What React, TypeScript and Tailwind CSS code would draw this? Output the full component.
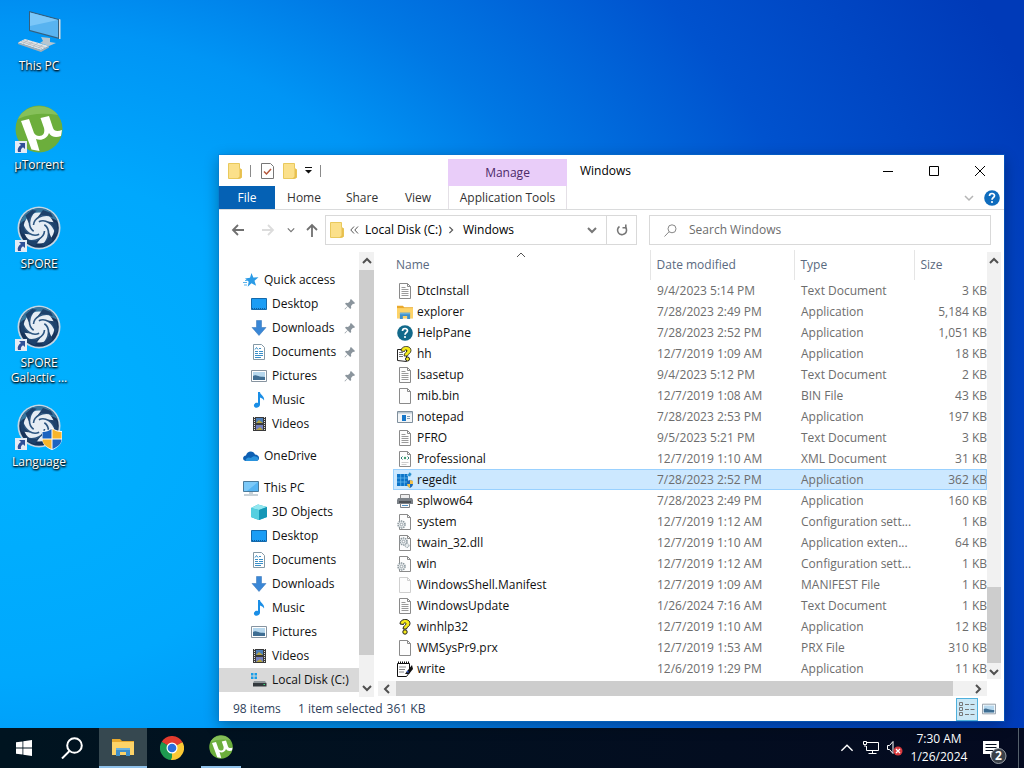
import React from "react";

type IconProps = { className?: string };

/* ---------- desktop icons ---------- */

function ThisPcIcon({ className }: IconProps) {
  return (
    <svg viewBox="0 0 48 48" className={className} aria-hidden="true">
      <path d="M26 31l9 1v4l6 1-7 3-9-3 3-2z" fill="#b6c6d0" />
      <path d="M14 5l30 8v20L14 25z" fill="#34607f" />
      <path d="M15 6.500l28 7.500v17.500L15 24z" fill="#58b3f0" />
      <path d="M15 6.500l28 7.500L15 20z" fill="#7cc7f8" />
      <path d="M44 13l1.500.5V33L44 33z" fill="#d5dde2" />
      <path d="M10 33l24 7-8 4L3 36.500z" fill="#e2e5e7" />
      <path d="M3 36.500L26 44l8-4v1.500l-8 4.500L3 38z" fill="#a5aeb5" />
      <path d="M8 34.500l22 7M6 35.500l21 7M13 34l-5 3.500M18 35.500l-5 3.500M23 37l-5 3.500M28 38.500l-5 3.500" stroke="#b0b8be" strokeWidth="0.800" />
    </svg>
  );
}

function UTorrentIcon({ className }: IconProps) {
  return (
    <svg viewBox="0 0 48 48" className={className} aria-hidden="true">
      <circle cx="24" cy="24" r="23.500" fill="#6cae3c" />
      <path d="M3 14C9 0 32-4 43 10 30 8 16 8 3 14z" fill="#86c05a" />
      <path
        d="M6 16l8-2 5 14c2 4 8 3.500 9.500 1 1-2 1-4 .5-6l-3.500-10 8.500-2 4 12c1 3 4 4 9 2l-1 6c-5 2-10 1-12-3-2 6-8 8-13 6l3.500 12-8-1.500z"
        fill="#fff"
      />
    </svg>
  );
}

function SporeIcon({ className }: IconProps) {
  return (
    <svg viewBox="0 0 48 48" className={className} fill="none" aria-hidden="true">
      <circle cx="24" cy="24" r="21.500" fill="#c3d6e4" />
      <circle cx="24" cy="24" r="19.800" fill="#17335a" />
      <path d="M5 20a19.500 19.500 0 0137.500-3C30 10 16 10 5 20z" fill="#35769f" />
      <circle cx="24" cy="24" r="15.500" fill="#e6edf4" />
      {[0, 60, 120, 180, 240, 300].map((angle) => (
        <g key={angle} transform={`rotate(${angle} 24 24)`}>
          <path d="M18.500 21C19 14 27 9.500 37 12" stroke="#2c5580" strokeWidth="1.600" />
          <path d="M21 15.500C25 10.500 31 9.500 38 13.500L36 9l-8-3z" fill="#1d416b" />
        </g>
      ))}
    </svg>
  );
}

function ShortcutBadge() {
  return (
    <svg viewBox="0 0 12 12" className="absolute bottom-0 left-0 size-3" aria-hidden="true">
      <path d="M0 0h12v12H0z" fill="#e4ebf5" />
      <path d="M4 2h6v6L8 6.200C6 7.500 5.500 9 6 11H3C2 8 3.500 5.500 6 4z" fill="#2f4f98" />
    </svg>
  );
}

function ShieldBadge() {
  return (
    <svg viewBox="0 0 22 22" className="absolute right-0 bottom-0 size-[22px]" aria-hidden="true">
      <path d="M11 0c3 2 6 3 10 3v8c0 5-5 9-10 11C6 20 1 16 1 11V3c4 0 7-1 10-3z" fill="#fff" />
      <path d="M10.500 1C8 3 5 4 1.500 4v6.500h9z" fill="#1c63c0" />
      <path d="M11.500 1C14 3 17 4 20.500 4v6.500h-9z" fill="#f8b52c" />
      <path d="M1.500 11.500h9V21c-5-2-9-5-9-9.500z" fill="#f8b52c" />
      <path d="M20.500 11.500h-9V21c5-2 9-5 9-9.500z" fill="#1c63c0" />
    </svg>
  );
}

/* ---------- small icons ---------- */

function FolderIcon({ className }: IconProps) {
  return (
    <svg viewBox="0 0 14 16" className={className} aria-hidden="true">
      <path d="M.500.500h11v5l2 1v8l-2 1H.500z" fill="#fbe08a" stroke="#e9c95c" />
      <path d="M11.500 5.500v8l-2 2h2.500l1.500-1v-8z" fill="#e8bf4f" />
    </svg>
  );
}

function ExplorerIcon({ className }: IconProps) {
  return (
    <svg viewBox="0 0 22 18" className={className} preserveAspectRatio="none" aria-hidden="true">
      <path d="M0 1h8l2 2h12v14H0z" fill="#e9a92d" />
      <path d="M0 4h22v13H0z" fill="#fdd368" />
      <path d="M4 10h14v8h-4v-4H8v4H4z" fill="#3f8fc9" />
      <path d="M4 10h14v2H4z" fill="#6bb1dd" />
    </svg>
  );
}

function Sheet({ children, faded }: { children?: React.ReactNode; faded?: boolean }) {
  return (
    <svg viewBox="0 0 16 16" className="size-4" fill="none" aria-hidden="true">
      <path d="M2.500.500h8l3 3v12h-11z" fill="#fdfdfd" stroke={faded ? "#cfcfcf" : "#8a8a8a"} />
      <path d="M10.500.500v3h3" stroke={faded ? "#cfcfcf" : "#8a8a8a"} />
      {children}
    </svg>
  );
}

function Gear({ x, y }: { x: number; y: number }) {
  return (
    <g>
      <circle cx={x} cy={y} r="3.500" fill="#e5e9eb" stroke="#8b979d" strokeWidth="1.500" strokeDasharray="1.400 0.800" />
      <circle cx={x} cy={y} r="1.300" fill="#fff" stroke="#8b979d" strokeWidth="0.800" />
    </g>
  );
}

function HelpIcon({ className, fill = "#0f6cbd" }: IconProps & { fill?: string }) {
  return (
    <svg viewBox="0 0 16 16" className={className} fill="none" aria-hidden="true">
      <circle cx="8" cy="8" r="7.800" fill={fill} />
      <path d="M5.500 6c0-3.300 5-3.200 5-.3C10.500 7.500 8 7.500 8 9.700" stroke="#fff" strokeWidth="1.700" />
      <circle cx="8" cy="12" r="1.100" fill="#fff" />
    </svg>
  );
}

const questionMark = "M4 5C4-1 14-1 14 4.500 14 8 10.500 7.500 10.500 10H7c0-3.500 3-3.500 3-5.300C10 3.500 7.500 3.500 7.500 5.500z";

const fileIcons: Record<string, React.ReactNode> = {
  text: (
    <Sheet>
      <path d="M4.500 4.500h4M4.500 6.500h7M4.500 8.500h7M4.500 10.500h7M4.500 12.500h7" stroke="#9a9a9a" />
    </Sheet>
  ),
  blank: <Sheet />,
  manifest: <Sheet faded />,
  explorer: <ExplorerIcon className="h-3.5 w-4" />,
  help: <HelpIcon className="size-4" fill="#12698a" />,
  hh: (
    <svg viewBox="0 0 16 16" className="size-4" fill="none" aria-hidden="true">
      <path d="M.500 3.500h9v12l-9-1z" fill="#fff" stroke="#222" />
      <path d="M2 6.500h4M2 8.500h4M2 10.500h4" stroke="#777" />
      <path d={questionMark} fill="#f5ea1b" stroke="#222" strokeWidth="0.800" />
      <circle cx="10.500" cy="13" r="2" fill="#f5ea1b" stroke="#222" />
    </svg>
  ),
  notepad: (
    <svg viewBox="0 0 16 16" className="size-4" fill="none" aria-hidden="true">
      <path d="M.500 2.500h15v11H.500z" fill="#f3f6f8" stroke="#7f8f9c" />
      <path d="M1 3h14v1.500H1z" fill="#b9c6d0" />
      <path d="M5 6h4v6H5z" fill="#1677c9" />
      <path d="M10 7.500h3M10 9.500h3" stroke="#7c9bb3" />
    </svg>
  ),
  xml: (
    <Sheet>
      <path d="M5.500 5.500L4 7l1.500 1.500M10.500 5.500L12 7l-1.500 1.500" stroke="#2e7f78" />
      <circle cx="8" cy="7" r="1.200" fill="#3f9e6e" />
      <path d="M4.500 11.500h7M4.500 13.500h5" stroke="#ccc" />
    </Sheet>
  ),
  regedit: (
    <svg viewBox="0 0 16 16" className="size-4" aria-hidden="true">
      <path d="M0 2h11v12H0z" fill="#0b73c8" />
      <path d="M0 6h11M0 10h11M3.700 2v12M7.400 2v12" stroke="#6ec0f2" strokeWidth="0.700" />
      <path d="M12.500 0l2.500 2-2 3-3-1.500z" fill="#268fce" stroke="#cce8ff" strokeWidth="0.600" />
      <path d="M10 9l3-1 3 1v3c0 2-1.500 3-3 4-1.500-1-3-2-3-4z" fill="#1d68b5" />
      <path d="M13 8l3 1v3h-3zM10 12h3v4c-1.500-1-3-2-3-4z" fill="#f2c14b" />
    </svg>
  ),
  printer: (
    <svg viewBox="0 0 16 16" className="size-4" fill="none" aria-hidden="true">
      <path d="M3.500 1.500h9v4h-9z" fill="#eee" stroke="#8a8a8a" />
      <path d="M1 5h14l1 2v4H0V7z" fill="#7b8187" />
      <path d="M2 8h12v2H2z" fill="#4b5055" />
      <path d="M3.500 10.500h9v4h-9z" fill="#fafafa" stroke="#7b8187" />
      <path d="M5 12.500h6" stroke="#4f91c6" />
    </svg>
  ),
  config: (
    <Sheet>
      <Gear x={4.500} y={10.500} />
    </Sheet>
  ),
  dll: (
    <Sheet>
      <Gear x={6.500} y={6.500} />
      <circle cx="10" cy="10.500" r="2" fill="#e5e9eb" stroke="#8b979d" strokeDasharray="1.200 0.600" />
    </Sheet>
  ),
  winhelp: (
    <svg viewBox="0 0 16 16" className="size-4" fill="none" aria-hidden="true">
      <path d={questionMark} transform="translate(-1 0)" fill="#f5ea1b" stroke="#222" />
      <circle cx="8" cy="13" r="2.200" fill="#f5ea1b" stroke="#222" />
    </svg>
  ),
  write: (
    <svg viewBox="0 0 16 16" className="size-4" fill="none" aria-hidden="true">
      <path d="M.500 2.500h12v9l-3 4h-9z" fill="#fff" stroke="#111" />
      <path d="M1 1.500h12" stroke="#111" strokeWidth="2" strokeDasharray="1 1" />
      <path d="M2 6h7M2 8.500h6M2 11h5" stroke="#888" />
      <path d="M8 13l3-4 4-5 1 4-4 5z" fill="#111" />
      <path d="M10 10l1.500 1.500" stroke="#2f55c4" strokeWidth="1.500" />
    </svg>
  ),
};

const navIcons: Record<string, React.ReactNode> = {
  star: (
    <svg viewBox="0 0 16 16" className="size-4" aria-hidden="true">
      <path d="M8.500 1l1.800 4.500 5.200-.2-4 3.400 1.600 5-4.600-2.500-3.800 3.600 1-5L2 6.500l5-.7z" fill="#2b9be6" />
      <path d="M0 10.500h4M1 13h3M2 8.500h2.500" stroke="#5cb3ec" />
    </svg>
  ),
  desktop: (
    <svg viewBox="0 0 16 16" className="size-4" fill="none" aria-hidden="true">
      <path d="M.500 2.500h15v11H.500z" fill="#1b9df5" stroke="#1469ab" />
      <path d="M1 12.500h14" stroke="#0f5d9c" strokeDasharray="1 1" />
    </svg>
  ),
  downloads: (
    <svg viewBox="0 0 16 16" className="size-4" aria-hidden="true">
      <path d="M5.500.500h5v7H15L8 15.500 1 7.500h4.500z" fill="#3a87d6" stroke="#2e6fb4" strokeWidth="0.500" />
    </svg>
  ),
  documents: (
    <svg viewBox="0 0 16 16" className="size-4" fill="none" aria-hidden="true">
      <path d="M2.500.500h8l3 3v12h-11z" fill="#fff" stroke="#8499a6" />
      <path d="M4 5.500l1.500-2L7 5.500M8 4.500h2M4 7.500h3M8 7.500h4M4 9.500h3M8 9.500h4M4 11.500h8M4 13.500h6" stroke="#3b8fc7" />
    </svg>
  ),
  pictures: <PictureIcon className="size-4" />,
  music: (
    <svg viewBox="0 0 16 16" className="size-4" fill="none" aria-hidden="true">
      <path d="M7 0h2c0 3 5 4 4 8.500C12 6.500 10.500 6 9 5.500V13c-1 4-7 3.500-6-.2C3.500 11 5.500 10.500 7 11z" fill="#1a8ee6" />
    </svg>
  ),
  videos: (
    <svg viewBox="0 0 16 16" className="size-4" fill="none" aria-hidden="true">
      <path d="M2 1h13v14H2z" fill="#3a3a3a" />
      <path d="M3.500 1v14M13.500 1v14" stroke="#e2e2e2" strokeDasharray="1 1" />
      <path d="M5 2h7v5H5z" fill="#4e7fb8" />
      <path d="M5 9h7v5H5z" fill="#7480c0" />
      <path d="M5 7l3-3 4 3zM5 14l4-3 3 3z" fill="#b4a442" />
    </svg>
  ),
  onedrive: (
    <svg viewBox="0 0 16 16" className="size-4" aria-hidden="true">
      <path d="M2.500 13C-1 12.500-.500 7.500 3 7.500 4 2.500 10.500 2 12 6.500c5 0 5.500 6.500 1 6.500z" fill="#0d5fb3" />
      <path d="M2.500 13c0-3 3-4.500 5.500-3 2.500-3 7-1.500 7.500 1 0 1-1 2-2.500 2z" fill="#2a93dd" />
    </svg>
  ),
  pc: (
    <svg viewBox="0 0 16 16" className="size-4" fill="none" aria-hidden="true">
      <path d="M.500 1.500h15v10H.500z" fill="#55b4f2" stroke="#4a7b9c" />
      <path d="M1 2h14L4 11H1z" fill="#7cc9f8" />
      <path d="M6 13h4M1 15h14" stroke="#90a4b0" />
    </svg>
  ),
  objects: (
    <svg viewBox="0 0 16 16" className="size-4" aria-hidden="true">
      <path d="M0 4l7-3.500L16 3v10l-8 3-8-3z" fill="#24b3c9" />
      <path d="M0 4l8 2 8-3-9-2.500z" fill="#93e7f0" />
      <path d="M0 4l8 2v10l-8-3z" fill="#55cfe0" />
      <path d="M8 6l8-3v10l-8 3z" fill="#1597b6" />
    </svg>
  ),
  disk: (
    <svg viewBox="0 0 16 16" className="size-4" aria-hidden="true">
      <path d="M0 1h2.500v2.500H0zM3.500 1H6v2.500H3.500zM0 4.500h2.500V7H0zM3.500 4.500H6V7H3.500z" fill="#1a9ee8" />
      <path d="M3 9h11l1.500 2H2z" fill="#8d9498" />
      <path d="M2 11h13.500v3.500H2z" fill="#33393d" />
      <path d="M12.500 12.500h1.500" stroke="#3de07b" />
    </svg>
  ),
};

function PictureIcon({ className }: IconProps) {
  return (
    <svg viewBox="0 0 16 16" className={className} fill="none" aria-hidden="true">
      <path d="M.500 2.500h15v11H.500z" fill="#fff" stroke="#8794a0" />
      <path d="M2 4h12v8H2z" fill="#b7d8ee" />
      <path d="M2 8c3-2 4 1 12 1v3H2z" fill="#3f6e93" />
    </svg>
  );
}

function PinIcon() {
  return (
    <svg viewBox="0 0 12 12" className="size-3" aria-hidden="true">
      <path d="M7 1l4 4-1 1-1-.2L7 8l.2 2-1 1-2.500-2.500L1 11.500.500 11l3-2.700L1 5.800l1-1 2 .2 2.200-2L6 2z" fill="#8b959d" />
    </svg>
  );
}

type Direction = "up" | "down" | "left" | "right";

const chevronPaths: Record<Direction, string> = {
  up: "M1 7l4-4 4 4",
  down: "M1 3l4 4 4-4",
  left: "M7 1L3 5l4 4",
  right: "M3 1l4 4-4 4",
};

function Chevron({ direction, className, weight = 1.5 }: IconProps & { direction: Direction; weight?: number }) {
  return (
    <svg viewBox="0 0 10 10" className={className} fill="none" stroke="currentColor" strokeWidth={weight} aria-hidden="true">
      <path d={chevronPaths[direction]} />
    </svg>
  );
}

function Arrow({ className, d }: IconProps & { d: string }) {
  return (
    <svg viewBox="0 0 14 14" className={className} fill="none" stroke="currentColor" strokeWidth="1.800" aria-hidden="true">
      <path d={d} />
    </svg>
  );
}

/* ---------- data ---------- */

const desktopItems = [
  { name: "This PC", icon: <ThisPcIcon className="size-12" /> },
  { name: "µTorrent", icon: <UTorrentIcon className="size-12" />, shortcut: true },
  { name: "SPORE", icon: <SporeIcon className="size-12" />, shortcut: true },
  { name: "SPORE Galactic ...", icon: <SporeIcon className="size-12" />, shortcut: true },
  { name: "Language", icon: <SporeIcon className="size-12" />, shortcut: true, shield: true },
];

type NavItem = { name: string; icon: string; pinned?: boolean; selected?: boolean };

const navGroups: { root: NavItem; items: NavItem[] }[] = [
  {
    root: { name: "Quick access", icon: "star" },
    items: [
      { name: "Desktop", icon: "desktop", pinned: true },
      { name: "Downloads", icon: "downloads", pinned: true },
      { name: "Documents", icon: "documents", pinned: true },
      { name: "Pictures", icon: "pictures", pinned: true },
      { name: "Music", icon: "music" },
      { name: "Videos", icon: "videos" },
    ],
  },
  { root: { name: "OneDrive", icon: "onedrive" }, items: [] },
  {
    root: { name: "This PC", icon: "pc" },
    items: [
      { name: "3D Objects", icon: "objects" },
      { name: "Desktop", icon: "desktop" },
      { name: "Documents", icon: "documents" },
      { name: "Downloads", icon: "downloads" },
      { name: "Music", icon: "music" },
      { name: "Pictures", icon: "pictures" },
      { name: "Videos", icon: "videos" },
      { name: "Local Disk (C:)", icon: "disk", selected: true },
    ],
  },
];

const files = [
  { name: "DtcInstall", icon: "text", date: "9/4/2023 5:14 PM", type: "Text Document", size: "3 KB" },
  { name: "explorer", icon: "explorer", date: "7/28/2023 2:49 PM", type: "Application", size: "5,184 KB" },
  { name: "HelpPane", icon: "help", date: "7/28/2023 2:52 PM", type: "Application", size: "1,051 KB" },
  { name: "hh", icon: "hh", date: "12/7/2019 1:09 AM", type: "Application", size: "18 KB" },
  { name: "lsasetup", icon: "text", date: "9/4/2023 5:12 PM", type: "Text Document", size: "2 KB" },
  { name: "mib.bin", icon: "blank", date: "12/7/2019 1:08 AM", type: "BIN File", size: "43 KB" },
  { name: "notepad", icon: "notepad", date: "7/28/2023 2:53 PM", type: "Application", size: "197 KB" },
  { name: "PFRO", icon: "text", date: "9/5/2023 5:21 PM", type: "Text Document", size: "3 KB" },
  { name: "Professional", icon: "xml", date: "12/7/2019 1:10 AM", type: "XML Document", size: "31 KB" },
  { name: "regedit", icon: "regedit", date: "7/28/2023 2:52 PM", type: "Application", size: "362 KB" },
  { name: "splwow64", icon: "printer", date: "7/28/2023 2:49 PM", type: "Application", size: "160 KB" },
  { name: "system", icon: "config", date: "12/7/2019 1:12 AM", type: "Configuration sett...", size: "1 KB" },
  { name: "twain_32.dll", icon: "dll", date: "12/7/2019 1:10 AM", type: "Application exten...", size: "64 KB" },
  { name: "win", icon: "config", date: "12/7/2019 1:12 AM", type: "Configuration sett...", size: "1 KB" },
  { name: "WindowsShell.Manifest", icon: "manifest", date: "12/7/2019 1:09 AM", type: "MANIFEST File", size: "1 KB" },
  { name: "WindowsUpdate", icon: "text", date: "1/26/2024 7:16 AM", type: "Text Document", size: "1 KB" },
  { name: "winhlp32", icon: "winhelp", date: "12/7/2019 1:10 AM", type: "Application", size: "12 KB" },
  { name: "WMSysPr9.prx", icon: "blank", date: "12/7/2019 1:53 AM", type: "PRX File", size: "310 KB" },
  { name: "write", icon: "write", date: "12/6/2019 1:29 PM", type: "Application", size: "11 KB" },
];

/* ---------- window parts ---------- */

function TitleBar() {
  return (
    <header className="flex h-[55px] border-b border-[#dadbdc]">
      <div className="flex w-[229px] flex-col">
        <div className="flex h-[31px] items-center pl-[9px]">
          <FolderIcon className="h-4 w-3.5" />
          <span className="ml-2 h-3 w-px bg-[#8a8a8a]" />
          <button aria-label="Properties" className="ml-2.5">
            <svg viewBox="0 0 13 16" className="h-4 w-[13px]" fill="none" aria-hidden="true">
              <path d="M.500.500h9l3 3v12H.500z" fill="#fff" stroke="#777" />
              <path d="M3 8.500l2.500 2.500L10 6" stroke="#b4573b" strokeWidth="1.500" />
            </svg>
          </button>
          <button aria-label="New folder" className="ml-[9px]">
            <FolderIcon className="h-4 w-3.5" />
          </button>
          <button aria-label="Customize Quick Access Toolbar" className="ml-2">
            <svg viewBox="0 0 7 7" className="size-[7px]" aria-hidden="true">
              <path d="M0 0h7v1H0zM0 3h7L3.500 6.500z" fill="#111" />
            </svg>
          </button>
          <span className="ml-2 h-3 w-px bg-[#8a8a8a]" />
        </div>
        <div className="flex h-[23px] text-[#333]">
          <button className="w-14 bg-[#0561b4] text-white">File</button>
          <button className="w-[58px]">Home</button>
          <button className="w-[58px]">Share</button>
          <button className="w-[54px]">View</button>
        </div>
      </div>
      <div className="flex w-[119px] flex-col pt-1">
        <div className="flex h-[27px] items-center justify-center bg-[#e9cdf9] text-[#4c2a68]">Manage</div>
        <button className="h-[23px] border-x border-[#e4e0e6] text-[#333]">Application Tools</button>
      </div>
      <div className="flex flex-1 flex-col">
        <div className="flex h-[31px] items-center pr-px">
          <h1 className="flex-1 pl-[13px] text-black">Windows</h1>
          <button aria-label="Minimize" className="flex w-[46px] justify-center">
            <svg viewBox="0 0 10 10" className="size-2.5" stroke="#000" aria-hidden="true"><path d="M0 5.500h10" /></svg>
          </button>
          <button aria-label="Maximize" className="flex w-[46px] justify-center">
            <svg viewBox="0 0 10 10" className="size-2.5" fill="none" stroke="#000" aria-hidden="true"><path d="M.500.500h9v9h-9z" /></svg>
          </button>
          <button aria-label="Close" className="flex w-[46px] justify-center">
            <svg viewBox="0 0 10 10" className="size-2.5" stroke="#000" aria-hidden="true"><path d="M0 0l10 10M10 0L0 10" /></svg>
          </button>
        </div>
        <div className="flex h-[23px] items-center justify-end gap-2.5 pr-1">
          <button aria-label="Expand the Ribbon" className="text-[#b5b5b5]">
            <Chevron direction="down" className="size-2.5" />
          </button>
          <button aria-label="Help">
            <HelpIcon className="size-4" />
          </button>
        </div>
      </div>
    </header>
  );
}

function AddressRow() {
  return (
    <div className="flex h-10 items-center pr-[13px] pl-3">
      <button aria-label="Back" className="flex w-[30px] text-[#707070]">
        <Arrow className="size-3.5" d="M13 7H2M7 2L2 7l5 5" />
      </button>
      <button aria-label="Forward" className="flex w-[26px] text-[#dcdcdc]">
        <Arrow className="size-3.5" d="M1 7h11M7 2l5 5-5 5" />
      </button>
      <button aria-label="Recent locations" className="flex w-[18px] text-[#777]">
        <Chevron direction="down" className="size-2" />
      </button>
      <button aria-label="Up" className="flex w-5 text-[#707070]">
        <Arrow className="size-3.5" d="M7 14V2M2 7l5-5 5 5" />
      </button>
      <div className="flex h-[30px] flex-1 items-center border border-[#d9d9d9] pl-1 text-black">
        <FolderIcon className="h-4 w-3.5" />
        <svg viewBox="0 0 9 8" className="ml-1.5 h-2 w-[9px]" fill="none" stroke="#555" aria-hidden="true">
          <path d="M4 .500L.800 4 4 7.500M8 .500L4.800 4 8 7.500" />
        </svg>
        <button className="ml-1.5 w-[76px] text-left whitespace-nowrap">Local Disk (C:)</button>
        <Chevron direction="right" className="ml-1.5 size-2 text-[#555]" />
        <button className="ml-2">Windows</button>
        <button aria-label="Previous locations" className="ml-auto px-[9px] text-[#777]">
          <Chevron direction="down" className="size-2.5" weight={2} />
        </button>
        <button aria-label="Refresh" className="flex h-full w-[30px] items-center justify-center border-l border-[#d9d9d9]">
          <svg viewBox="0 0 12 12" className="size-3" fill="none" stroke="#777" strokeWidth="1.600" aria-hidden="true">
            <path d="M3.500 2.500a4.500 4.500 0 106 .800" />
            <path d="M9.800.500v3.300H6.500" />
          </svg>
        </button>
      </div>
      <label className="ml-3 flex h-[30px] w-[342px] items-center gap-3 border border-[#d9d9d9] px-3.5">
        <svg viewBox="0 0 13 13" className="h-[13px] w-[13px]" fill="none" stroke="#888" aria-hidden="true">
          <circle cx="8" cy="4.800" r="4" />
          <path d="M5 7.800L.500 12.500" />
        </svg>
        <input
          type="search"
          aria-label="Search Windows"
          placeholder="Search Windows"
          className="min-w-0 flex-1 outline-none placeholder:text-[#6d6d6d]"
        />
      </label>
    </div>
  );
}

function NavRow({ item, nested }: { item: NavItem; nested?: boolean }) {
  return (
    <li>
      <button
        className={`flex h-6 w-full items-center gap-[5px] whitespace-nowrap text-[#111] ${nested ? "pl-8" : "pl-6"} ${item.selected ? "bg-[#d9d9d9]" : ""}`}
      >
        {navIcons[item.icon]}
        <span className="flex-1 text-left">{item.name}</span>
        {item.pinned && (
          <span className="pr-[3px]">
            <PinIcon />
          </span>
        )}
      </button>
    </li>
  );
}

function NavPane() {
  return (
    <nav className="flex w-[155px]">
      <div className="flex flex-1 flex-col gap-2 pt-[18px] pb-[5px]">
        {navGroups.map((group) => (
          <ul key={group.root.name}>
            <NavRow item={group.root} />
            {group.items.map((item) => (
              <NavRow key={item.name} item={item} nested />
            ))}
          </ul>
        ))}
      </div>
      <div className="mt-0.5 flex w-[15px] flex-col items-center bg-[#f1f1f1] text-[#505050]">
        <Chevron direction="up" className="my-1 size-2.5" weight={2} />
        <div className="mb-7 w-full flex-1 bg-[#cdcdcd]" />
        <Chevron direction="down" className="mb-1 size-2.5" weight={2} />
      </div>
    </nav>
  );
}

function FileTable() {
  return (
    <table className="w-full table-fixed border-collapse text-left">
      <colgroup>
        <col />
        <col className="w-36" />
        <col className="w-[120px]" />
        <col className="w-[73px]" />
      </colgroup>
      <thead className="text-[#5a6a80]">
        <tr className="h-[30px]">
          <th className="relative p-0 pl-[3px] font-normal">
            Name
            <Chevron direction="up" className="absolute inset-x-0 top-0 mx-auto size-2.5 text-[#555]" weight={1} />
          </th>
          <th className="border-l border-[#e5e5e5] p-0 pl-1.5 font-normal">Date modified</th>
          <th className="border-l border-[#e5e5e5] p-0 pl-1.5 font-normal">Type</th>
          <th className="border-l border-[#e5e5e5] p-0 pl-1.5 font-normal">Size</th>
        </tr>
      </thead>
      <tbody className="text-[#6d6d6d]">
        {files.map((file) => (
          <tr
            key={file.name}
            className={`h-[21px] ${file.name === "regedit" ? "bg-[#cce8ff] outline -outline-offset-1 outline-[#99d1ff]" : ""}`}
          >
            <td className="p-0 pl-1">
              <span className="flex items-center gap-1 text-[#111]">
                {fileIcons[file.icon]}
                {file.name}
              </span>
            </td>
            <td className="p-0 pl-[7px]">{file.date}</td>
            <td className="p-0 pl-[7px] whitespace-nowrap">{file.type}</td>
            <td className="p-0 text-right">{file.size}</td>
          </tr>
        ))}
      </tbody>
    </table>
  );
}

function FilePane() {
  return (
    <div className="flex min-w-0 flex-1 flex-col pr-[3px] pl-1">
      <div className="flex">
        <div className="min-w-0 flex-1 pl-[15px]">
          <FileTable />
        </div>
        <div className="mt-0.5 flex w-3.5 flex-col items-center bg-[#f1f1f1] text-[#505050]">
          <Chevron direction="up" className="my-1 size-2.5" weight={2} />
          <div className="mt-auto h-[76px] w-full bg-[#cdcdcd]" />
          <Chevron direction="down" className="mt-1 mb-0.5 size-2.5" weight={2} />
        </div>
      </div>
      <div className="mt-0.5 mr-3.5 flex h-[15px] items-center bg-[#f1f1f1] text-[#505050]">
        <Chevron direction="left" className="mx-1 size-2.5" weight={2} />
        <div className="h-full flex-1 bg-[#cdcdcd]" />
        <Chevron direction="right" className="mr-1 ml-5 size-2.5" weight={2} />
      </div>
    </div>
  );
}

function StatusBar() {
  return (
    <footer className="flex h-6 items-center pr-2 pl-3.5 text-[#2f3f5c]">
      <span className="w-[65px]">98 items</span>
      <span className="mr-1 whitespace-nowrap">1 item selected</span>
      <span>361 KB</span>
      <button aria-label="Details view" className="ml-auto flex h-[23px] w-[22px] items-center justify-center border border-[#4fb0dc] bg-[#cbe8f6]">
        <svg viewBox="0 0 16 14" className="h-3.5 w-4" fill="none" stroke="#777" aria-hidden="true">
          <path d="M.500.500h3v3h-3zM.500 5.500h3v3h-3zM.500 10.500h3v3h-3zM6 2.500h4M11.500 2.500h4M6 7.500h4M11.500 7.500h4M6 12.500h4M11.500 12.500h4" />
        </svg>
      </button>
      <button aria-label="Large icons view" className="ml-1">
        <PictureIcon className="size-3.5" />
      </button>
    </footer>
  );
}

/* ---------- taskbar ---------- */

function Taskbar() {
  return (
    <div className="flex h-10 items-stretch bg-linear-to-r from-[#001420] to-[#040a20] text-white">
      <button aria-label="Start" className="flex w-12 items-center justify-center">
        <svg viewBox="0 0 16 16" className="size-4" fill="#fff" aria-hidden="true">
          <path d="M0 2.300L6.500 1.400v6.200H0zM7.300 1.300L16 0v7.600H7.300zM0 8.400h6.500v6.200L0 13.700zM7.300 8.400H16V16l-8.700-1.300z" />
        </svg>
      </button>
      <button aria-label="Search" className="mr-1 flex w-[47px] items-center justify-center">
        <svg viewBox="0 0 22 22" className="size-[22px]" fill="none" stroke="#fff" strokeWidth="2" aria-hidden="true">
          <circle cx="13.500" cy="8.500" r="7.300" />
          <path d="M8.500 14L1 21.500" />
        </svg>
      </button>
      <button aria-label="File Explorer" className="flex w-12 items-center justify-center border-b-2 border-[#8fc1ea] bg-[#364850]">
        <ExplorerIcon className="h-[18px] w-[22px]" />
      </button>
      <button aria-label="Google Chrome" className="flex w-[50px] items-center justify-center">
        <svg viewBox="0 0 24 24" className="size-6" aria-hidden="true">
          <path d="M12 12L1.600 6A12 12 0 0122.400 6z" fill="#e33b2e" />
          <path d="M12 12L22.400 6A12 12 0 0112 24z" fill="#fcc934" />
          <path d="M12 12v12A12 12 0 011.600 6z" fill="#1e9a50" />
          <path d="M12 6.500h10.700L22.400 6H4z" fill="#e33b2e" />
          <path d="M16.800 14.700L12 24l-1-.1 3-8z" fill="#fcc934" />
          <path d="M1.600 6l5.600 8.700L12 12z" fill="#1e9a50" />
          <circle cx="12" cy="12" r="5.500" fill="#fff" />
          <circle cx="12" cy="12" r="4.300" fill="#2b6fdc" />
        </svg>
      </button>
      <button aria-label="µTorrent" className="ml-1 flex w-10 items-center justify-center border-b-2 border-[#8fc1ea]">
        <UTorrentIcon className="size-6" />
      </button>
      <div className="ml-auto flex items-center">
        <button aria-label="Show hidden icons" className="mr-2">
          <Chevron direction="up" className="size-3.5" weight={1} />
        </button>
        <button aria-label="Network">
          <svg viewBox="0 0 18 16" className="h-4 w-[18px]" fill="none" stroke="#fff" aria-hidden="true">
            <path d="M5 2.500h11.500v8h-12V6M10.500 10.500v3M6.500 13.500h8" />
            <path d="M1.500 1.500h3v3h-3zM3 4.500V7" />
          </svg>
        </button>
        <button aria-label="Volume, muted" className="ml-1.5">
          <svg viewBox="0 0 17 16" className="h-4 w-[17px]" fill="none" stroke="#fff" aria-hidden="true">
            <path d="M1.500 5.500h2l3.500-4v12l-3.500-4h-2z" />
            <circle cx="12" cy="11" r="4.500" fill="#d83a3e" stroke="none" />
            <path d="M10 9l4 4M14 9l-4 4" strokeWidth="1.300" />
          </svg>
        </button>
        <button className="ml-[5px] flex w-[62px] flex-col items-center whitespace-nowrap leading-[18px]">
          <span>7:30 AM</span>
          <span>1/26/2024</span>
        </button>
        <button aria-label="2 new notifications" className="relative ml-2 h-10 w-10">
          <svg viewBox="0 0 26 26" className="mt-1.5 ml-1 size-[26px]" fill="none" aria-hidden="true">
            <path d="M1 3h16v13h-6l-3 4v-4H1z" fill="#fff" />
            <path d="M3.500 6.500h11M3.500 9.500h11M3.500 12.500h8" stroke="#061020" />
            <circle cx="16.500" cy="18" r="7.500" fill="#3a4048" stroke="#9aa0a8" />
          </svg>
          <span className="absolute bottom-0.5 left-[17px] leading-5 font-bold">2</span>
        </button>
        <button aria-label="Show desktop" className="h-10 w-1.5 border-l border-[#55606c]" />
      </div>
    </div>
  );
}

export default function App() {
  return (
    <div className="relative flex h-screen min-h-[768px] flex-col overflow-hidden bg-[radial-gradient(108%_118%_at_0%_55%,#00b2ff_0%,#00a8fd_28%,#0095f5_44%,#0078e4_56%,#0052ce_76%,#003ab8_100%)] font-['Open_Sans','Noto_Sans',sans-serif] text-[12px] leading-4">
      <main className="flex-1 pl-px">
        <ul className="w-[76px]">
          {desktopItems.map((item) => (
            <li key={item.name} className="h-[99px] pt-1.5">
              <button className="flex w-full flex-col items-center gap-1 text-white">
                <span className="relative">
                  {item.icon}
                  {item.shortcut && <ShortcutBadge />}
                  {item.shield && <ShieldBadge />}
                </span>
                <span className="w-[62px] leading-[15px] [text-shadow:1px_1px_2px_#000,0_1px_2px_#000]">{item.name}</span>
              </button>
            </li>
          ))}
        </ul>
        <section
          aria-label="Windows"
          className="absolute top-[155px] right-5 left-[219px] bg-white shadow-[0_0_0_1px_#0a74d066,0_4px_14px_#00000055]"
        >
          <TitleBar />
          <AddressRow />
          <div className="flex">
            <NavPane />
            <FilePane />
          </div>
          <StatusBar />
        </section>
      </main>
      <Taskbar />
    </div>
  );
}
